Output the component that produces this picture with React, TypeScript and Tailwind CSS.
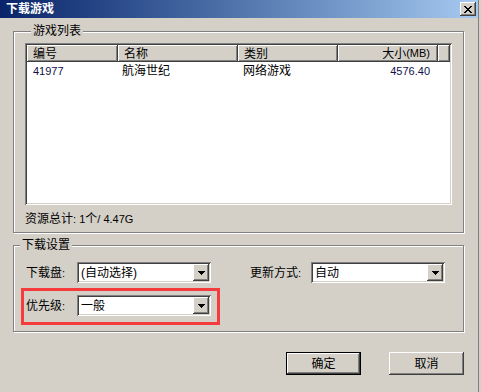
import React from "react";

const raised =
  "shadow-[inset_-1px_-1px_0_#404040,inset_1px_1px_0_#ffffff,inset_-2px_-2px_0_#808080]";
const sunken =
  "shadow-[inset_1px_1px_0_#808080,inset_-1px_-1px_0_#ffffff,inset_2px_2px_0_#404040,inset_-2px_-2px_0_#d4d0c8]";

function Arrow() {
  return (
    <svg width="7" height="4" viewBox="0 0 7 4" shapeRendering="crispEdges">
      <rect x="0" y="0" width="7" height="1" fill="#000" />
      <rect x="1" y="1" width="5" height="1" fill="#000" />
      <rect x="2" y="2" width="3" height="1" fill="#000" />
      <rect x="3" y="3" width="1" height="1" fill="#000" />
    </svg>
  );
}

function CloseX() {
  const px: [number, number][] = [];
  const rows = ["XX    XX", " XX  XX ", "  XXXX  ", "   XX   ", "  XXXX  ", " XX  XX ", "XX    XX"];
  rows.forEach((r, y) => r.split("").forEach((c, x) => c === "X" && px.push([x, y])));
  return (
    <svg width="8" height="7" viewBox="0 0 8 7" shapeRendering="crispEdges">
      {px.map(([x, y]) => (
        <rect key={`${x}-${y}`} x={x} y={y} width="1" height="1" fill="#000" />
      ))}
    </svg>
  );
}

function Combo({ children }: { children: React.ReactNode }) {
  return (
    <div className={`w-[134px] h-[21px] bg-white p-[2px] flex ${sunken}`}>
      <div className="flex-1 flex items-center pl-[2px] text-[12px] leading-none text-black">{children}</div>
      <div className={`w-[16px] h-[17px] bg-[#d4d0c8] flex items-center justify-center ${raised}`}>
        <Arrow />
      </div>
    </div>
  );
}

function HeaderCell({ w, children, right }: { w: string; children?: React.ReactNode; right?: boolean }) {
  return (
    <div
      className={`${w} h-[17px] bg-[#d4d0c8] flex items-center ${right ? "justify-end pr-[8px]" : "pl-[6px]"} ${raised}`}
    >
      {children}
    </div>
  );
}

export default function App() {
  return (
    <div className="w-[481px] h-[392px] bg-[#d4d0c8] flex font-['Liberation_Sans','Noto_Sans_CJK_SC',sans-serif] text-[12px] text-black overflow-hidden">
      <div className="w-[478px] flex flex-col">
        {/* Title bar */}
        <div className="h-[18px] w-[478px] flex items-center justify-between pl-[6px] pr-[2px] bg-gradient-to-r from-[#0a246a] to-[#a6caf0]">
          <span className="text-white font-bold text-[12px] leading-none">下载游戏</span>
          <div className={`w-[16px] h-[14px] bg-[#d4d0c8] flex items-center justify-center ${raised}`}>
            <CloseX />
          </div>
        </div>

        {/* Group 1 */}
        <fieldset className="mt-[6px] ml-[13px] w-[451px] border border-[#808080] shadow-[inset_1px_1px_0_#ffffff,1px_1px_0_#ffffff] pl-[11px] pt-[5px] pb-[6px]">
          <legend className="ml-[6px] px-[2px] bg-[#d4d0c8] leading-[14px]">游戏列表</legend>
          <div className={`w-[427px] h-[162px] bg-white p-[2px] flex flex-col ${sunken}`}>
            <div className="flex">
              <HeaderCell w="w-[91px]">编号</HeaderCell>
              <HeaderCell w="w-[120px]">名称</HeaderCell>
              <HeaderCell w="w-[100px]">类别</HeaderCell>
              <HeaderCell w="w-[100px]" right>
                大小<span className="text-[11px]">(MB)</span>
              </HeaderCell>
              <div className={`flex-1 h-[17px] bg-[#d4d0c8] ${raised}`} />
            </div>
            <div className="flex h-[16px] items-center mt-[1px]">
              <div className="w-[91px] pl-[6px] text-[11px] text-[#10104a]">41977</div>
              <div className="w-[120px] pl-[4px]">航海世纪</div>
              <div className="w-[100px] pl-[5px]">网络游戏</div>
              <div className="w-[100px] pr-[8px] text-right text-[11px] text-[#10104a]">4576.40</div>
            </div>
          </div>
          <div className="mt-[7px] leading-[14px]">
            资源总计<span className="text-[11px]">: 1</span>个<span className="text-[11px]">/ 4.47G</span>
          </div>
        </fieldset>

        {/* Group 2 */}
        <fieldset className="mt-[5px] ml-[13px] w-[451px] border border-[#808080] shadow-[inset_1px_1px_0_#ffffff,1px_1px_0_#ffffff] pt-[10px] pb-[6px]">
          <legend className="ml-[6px] px-[2px] bg-[#d4d0c8] leading-[14px]">下载设置</legend>
          <div className="flex items-center pl-[12px]">
            <div className="w-[51px]">
              下载盘<span className="text-[11px]">:</span>
            </div>
            <Combo>(自动选择)</Combo>
            <div className="w-[61px] ml-[39px]">
              更新方式<span className="text-[11px]">:</span>
            </div>
            <Combo>自动</Combo>
          </div>
          <div className="mt-[5px] ml-[7px] w-[199px] border-[3px] border-[#f53b3b] pl-[2px] pt-[4px] pb-[6px] flex items-center">
            <div className="w-[51px]">
              优先级<span className="text-[11px]">:</span>
            </div>
            <Combo>一般</Combo>
          </div>
        </fieldset>

        {/* Buttons */}
        <div className="mt-[20px] flex justify-end gap-[28px] pr-[14px]">
          <div className="w-[75px] h-[23px] border border-black">
            <div className={`w-full h-full flex items-center justify-center bg-[#d4d0c8] ${raised}`}>确定</div>
          </div>
          <div className={`w-[75px] h-[23px] flex items-center justify-center bg-[#d4d0c8] ${raised}`}>取消</div>
        </div>
      </div>
      <div className="w-[1px] h-full bg-[#808080]" />
      <div className="flex-1" />
    </div>
  );
}
